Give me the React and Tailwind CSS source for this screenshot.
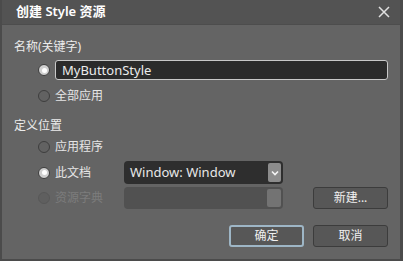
import React, { useState } from "react";

const font = "font-['Segoe_UI','Noto_Sans','Noto_Sans_CJK_SC',sans-serif]";

const Radio = ({ checked, disabled }) => (
  <span
    className={`w-[12px] h-[12px] rounded-full shrink-0 flex items-center justify-center border ${
      disabled
        ? "border-[#585858] bg-[#5f5f5f]"
        : checked
        ? "border-[#3c3c3c] bg-[#cfcfcf]"
        : "border-[#3e3e3e] bg-[#626262]"
    }`}
  >
    {checked && <span className="w-[5px] h-[5px] rounded-full bg-white" />}
  </span>
);

const Option = ({ label, checked, disabled, children }) => (
  <div className="flex items-center h-full">
    <div className="flex items-center gap-[5px] w-[110px] pl-[24px] shrink-0">
      <Radio checked={checked} disabled={disabled} />
      <span
        className={`text-[12px] leading-none whitespace-nowrap ${
          disabled ? "text-[#7c7c7c]" : "text-[#e6e6e6]"
        }`}
      >
        {label}
      </span>
    </div>
    {children}
  </div>
);

const Button = ({ children, primary }) => (
  <button
    className={`w-[75px] h-[22px] rounded-[3px] bg-[#575757] text-[12px] text-[#f0f0f0] flex items-center justify-center ${
      primary ? "border-2 border-[#9eb6c6]" : "border border-[#3c3c3c]"
    }`}
  >
    {children}
  </button>
);

export default function App() {
  const [name, setName] = useState("MyButtonStyle");

  return (
    <div
      className={`w-[403px] h-[261px] bg-[#646464] border-l-2 border-r-[3px] border-b-[2px] border-[#4b4b4b] flex flex-col ${font}`}
    >
      {/* Title bar */}
      <div className="h-[25px] bg-[#535353] border-b border-[#4d4d4d] flex items-center justify-between pl-[14px] pr-[10px] shrink-0">
        <span className="text-[13px] font-semibold text-white">创建 Style 资源</span>
        <svg width="12" height="12" viewBox="0 0 12 12" className="text-[#e0e0e0]">
          <path d="M1 1L11 11M11 1L1 11" stroke="currentColor" strokeWidth="1.5" />
        </svg>
      </div>

      <div className="flex flex-col pl-[12px]">
        <div className="h-[16px] mt-[14px] flex items-center text-[12px] text-[#ececec]">名称(关键字)</div>

        <div className="h-[20px] mt-[5px] flex items-center">
          <div className="flex items-center pl-[24px] gap-[5px]">
            <Radio checked />
            <input
              value={name}
              onChange={(e) => setName(e.target.value)}
              className="w-[333px] h-[20px] bg-[#2b2b2b] border border-[#c8c8c8] rounded-[3px] px-[6px] text-[13px] text-[#ececec] outline-none"
            />
          </div>
        </div>

        <div className="h-[20px] mt-[6px]">
          <Option label="全部应用" />
        </div>

        <div className="h-[16px] mt-[12px] flex items-center text-[12px] text-[#ececec]">定义位置</div>

        <div className="h-[20px] mt-[3px]">
          <Option label="应用程序" />
        </div>

        <div className="h-[23px] mt-[4px]">
          <Option label="此文档" checked>
            <div className="w-[159px] h-[23px] bg-[#2e2e2e] rounded-[4px] flex items-center justify-between pl-[6px] pr-[2px]">
              <span className="text-[13px] text-[#e8e8e8]">Window: Window</span>
              <span className="w-[13px] h-[19px] bg-[#8c8c8c] rounded-[2px] flex items-center justify-center">
                <svg width="8" height="6" viewBox="0 0 8 6">
                  <path d="M1 1.5L4 4.5L7 1.5" stroke="#f4f4f4" strokeWidth="1.6" fill="none" />
                </svg>
              </span>
            </div>
          </Option>
        </div>

        <div className="h-[22px] mt-[3px] flex items-center">
          <Option label="资源字典" disabled>
            <div className="w-[159px] h-[22px] bg-[#515151] rounded-[4px] flex items-center justify-end pr-[2px]">
              <span className="w-[14px] h-[18px] bg-[#737373] rounded-[2px]" />
            </div>
            <div className="ml-[30px]">
              <Button>新建...</Button>
            </div>
          </Option>
        </div>

        <div className="flex justify-end gap-[9px] mt-[16px] pr-[12px]">
          <Button primary>确定</Button>
          <Button>取消</Button>
        </div>
      </div>
    </div>
  );
}
